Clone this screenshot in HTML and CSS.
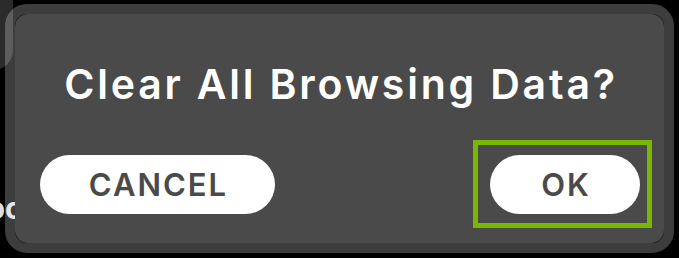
FILE: index.html
```html
<!DOCTYPE html>
<html lang="en">
<head>
  <meta charset="UTF-8" />
  <meta name="viewport" content="width=device-width, initial-scale=1.0"/>
  <title>Clear All Browsing Data?</title>
  <link rel="stylesheet" href="styles.css">
</head>
<body>

  <div class="fundo">
    <div class="fundo-icone"></div>
    <span class="fundo-texto">Doc</span>
  </div>

  <div class="dialogo">
    <div class="dialogo-conteudo">
      <h2>Clear All Browsing Data?</h2>
      <div class="botoes">
        <button class="cancelar">CANCEL</button>
        <div class="foco">
          <button class="ok">OK</button>
        </div>
      </div>
    </div>
  </div>

</body>
</html>
```

FILE: styles.css
```css
:root {
  --painel: #4a4a4a;
  --borda: rgba(255,255,255,0.24);
  --verde: #76b900;
  --texto-botao: #4a4a4a;
}

* { box-sizing: border-box; margin: 0; padding: 0; }

body {
  font-family: 'Inter', 'Lato', sans-serif;
  background: #000;
  width: 679px;
  height: 258px;
  overflow: hidden;
  padding: 4px 0 0 5px;
}

.fundo-icone {
  position: absolute;
  left: -40px;
  top: -20px;
  width: 53px;
  height: 90px;
  border-radius: 20px;
  background: #2b2b2b;
}

.fundo-texto {
  position: absolute;
  left: -35px;
  top: 190px;
  font-size: 30px;
  font-weight: bold;
  color: #ddd;
}

.dialogo {
  position: relative;
  z-index: 1;
  width: 669px;
  height: 249px;
  border: 10px solid var(--borda);
  border-radius: 22px;
}

.dialogo-conteudo {
  height: 100%;
  background: var(--painel);
  border-radius: 13px;
  padding-top: 45px;
}

h2 {
  font-size: 41px;
  font-weight: 600;
  color: #fff;
  text-align: center;
  line-height: 50px;
  letter-spacing: 2.8px;
  padding-left: 3px;
}

.botoes {
  display: flex;
  align-items: center;
  justify-content: space-between;
  padding: 0 12px 0 25px;
  margin-top: 31px;
}

button {
  height: 59px;
  border: none;
  border-radius: 30px;
  background: #fff;
  color: var(--texto-botao);
  font-family: inherit;
  font-size: 31px;
  font-weight: 600;
  letter-spacing: 2px;
  padding-left: 2px;
}

.cancelar {
  width: 235px;
}

.foco {
  border: 5px solid var(--verde);
  padding: 10px 7px 9px 12px;
}

.ok {
  width: 150px;
}
```
